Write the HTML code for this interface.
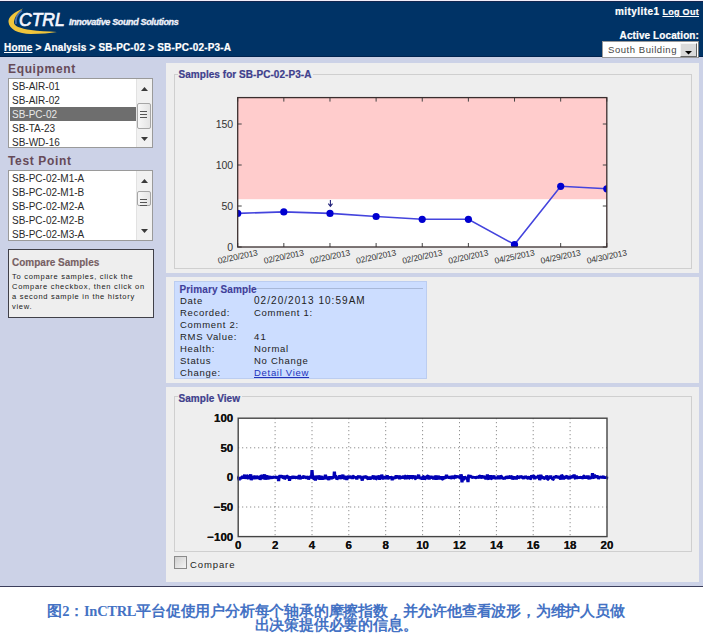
<!DOCTYPE html>
<html><head><meta charset="utf-8">
<style>
*{margin:0;padding:0;box-sizing:border-box}
html,body{width:703px;height:636px;overflow:hidden;background:#fff;font-family:"Liberation Sans",sans-serif}
.a{position:absolute}
#hdr{left:0;top:0;width:703px;height:57px;background:#003366;border-top:1px solid #f3eefa;box-shadow:inset 0 1px 0 #13264f;border-bottom:1px solid #00234f}
#side{left:0;top:57px;width:703px;height:529px;background:#ccd2e7}
#bline{left:0;top:586px;width:703px;height:1px;background:#3c3f5c}
.panel{background:#eeeeee;left:166px;width:533px}
.fs{border:1px solid #cfcfcf}
.ttl{color:#40408c;font-weight:bold;font-size:10px;letter-spacing:0.05px;line-height:12px;background:#eeeeee;padding:0 2px 0 1px;-webkit-text-stroke:0.2px #3a3a8c}
.list{background:#fff;border:1px solid #9a9a9a}
.li{position:absolute;left:3px;font-size:10px;line-height:12px;color:#2a2a2a;white-space:nowrap}
.hd{color:#664a58;font-weight:bold;font-size:12px;letter-spacing:0.65px}
.wt{color:#fff;font-weight:bold;white-space:nowrap}
.lab{position:absolute;font-size:9.5px;line-height:12px;letter-spacing:0.7px;color:#222;white-space:nowrap}
</style></head><body>
<div id="hdr" class="a"></div>
<div id="side" class="a"></div>
<div id="bline" class="a"></div>

<!-- header content -->
<svg class="a" style="left:0;top:0" width="80" height="57">
  <path d="M22,10.5 C17,14 15,18 16,24" fill="none" stroke="#6f8fd0" stroke-width="1.6" opacity="0.7"/>
  <path d="M23,8.5 C14,12 8,17 8.5,22 C9,29 18,34 31,34 C41,34 50,33 57,32 C48,31.5 38,31 31,30 C20,28.5 13.5,26 14,22 C14.5,17 18,12 23,8.5 Z" fill="#f0c53c"/>
</svg>
<div class="a" style="left:19px;top:8.5px;font-size:17.5px;line-height:22px;font-style:italic;color:#f4f6ff;-webkit-text-stroke:0.7px #f4f6ff;letter-spacing:0px">CTRL</div>
<div class="a wt" style="left:69px;top:16px;font-size:9px;line-height:12px;font-style:italic;letter-spacing:-0.35px;color:#f0f2fa;-webkit-text-stroke:0.35px #f0f2fa">Innovative Sound Solutions</div>
<div class="a wt" style="left:4px;top:42px;font-size:10px;letter-spacing:0.17px;-webkit-text-stroke:0.2px #fff"><span style="text-decoration:underline">Home</span> &gt; Analysis &gt; SB-PC-02 &gt; SB-PC-02-P3-A</div>
<div class="a wt" style="left:615px;top:6px;font-size:10px;line-height:12px;-webkit-text-stroke:0.2px #fff"><span style="letter-spacing:0.45px">mitylite1</span> <span style="font-size:9px;text-decoration:underline;letter-spacing:0.3px">Log Out</span></div>
<div class="a wt" style="right:4px;top:30px;font-size:10px;line-height:12px;letter-spacing:0.1px;-webkit-text-stroke:0.2px #fff">Active Location:</div>
<div class="a" style="left:602px;top:41px;width:97px;height:17px;background:#fff;border:1px solid #9a9a9a;border-right-color:#777"></div>
<div class="a" style="left:608px;top:43px;font-size:9.5px;line-height:13px;color:#444;letter-spacing:0.55px">South Building</div>
<div class="a" style="left:680px;top:43px;width:17px;height:14px;background:#dadada;border:1px solid #f4f4f4;border-right-color:#666;border-bottom-color:#666"></div>
<svg class="a" style="left:684.5px;top:50.5px" width="7" height="4"><path d="M0,0 H7 L3.5,3.5 Z" fill="#000"/></svg>

<!-- sidebar -->
<div class="a hd" style="left:8px;top:62px">Equipment</div>
<div class="a list" style="left:8px;top:78px;width:145px;height:70px">
  <div class="li" style="top:2px">SB-AIR-01</div>
  <div class="li" style="top:16px">SB-AIR-02</div>
  <div class="a" style="left:1px;top:28px;width:126px;height:14px;background:#6e6e6e"></div>
  <div class="li" style="top:30px;color:#e8e8e8">SB-PC-02</div>
  <div class="li" style="top:44px">SB-TA-23</div>
  <div class="li" style="top:58px">SB-WD-16</div>
  <div class="a" style="left:127px;top:0;width:16px;height:100%;background:#f1f1f1;border-left:1px solid #e2e2e2"></div>
  <svg class="a" style="left:132px;top:8px" width="7" height="4"><path d="M0,4 L3.5,0 L7,4 Z" fill="#3a3a3a"/></svg>
  <div class="a" style="left:128px;top:24px;width:14px;height:26px;border:1px solid #a6a6a6;border-radius:2px;background:linear-gradient(90deg,#f7f7f7,#e4e4e4)"></div>
  <div class="a" style="left:131px;top:32px;width:7px;height:1px;background:#555;box-shadow:0 3px 0 #555,0 6px 0 #555"></div>
  <svg class="a" style="left:132px;top:58px" width="7" height="4"><path d="M0,0 L3.5,4 L7,0 Z" fill="#3a3a3a"/></svg>
</div>
<div class="a hd" style="left:8px;top:154px">Test Point</div>
<div class="a list" style="left:8px;top:170px;width:145px;height:71px">
  <div class="li" style="top:2px">SB-PC-02-M1-A</div>
  <div class="li" style="top:16px">SB-PC-02-M1-B</div>
  <div class="li" style="top:30px">SB-PC-02-M2-A</div>
  <div class="li" style="top:44px">SB-PC-02-M2-B</div>
  <div class="li" style="top:58px">SB-PC-02-M3-A</div>
  <div class="a" style="left:127px;top:0;width:16px;height:100%;background:#f1f1f1;border-left:1px solid #e2e2e2"></div>
  <svg class="a" style="left:132px;top:8px" width="7" height="4"><path d="M0,4 L3.5,0 L7,4 Z" fill="#3a3a3a"/></svg>
  <div class="a" style="left:128px;top:20px;width:14px;height:15px;border:1px solid #a6a6a6;border-radius:2px;background:linear-gradient(90deg,#f7f7f7,#e4e4e4)"></div>
  <div class="a" style="left:131px;top:28px;width:7px;height:1px;background:#555;box-shadow:0 3px 0 #555,0 6px 0 #555"></div>
  <svg class="a" style="left:132px;top:58px" width="7" height="4"><path d="M0,0 L3.5,4 L7,0 Z" fill="#3a3a3a"/></svg>
</div>
<div class="a" style="left:8px;top:249px;width:146px;height:69px;background:#eeeeee;border:1px solid #404048"></div>
<div class="a hd" style="left:12px;top:257px;font-size:10px;letter-spacing:0;color:#765f63;-webkit-text-stroke:0.15px #765f63">Compare Samples</div>
<div class="a" style="left:12px;top:272px;font-size:7.5px;line-height:10.1px;color:#1a1a1a;width:150px;letter-spacing:0.72px;white-space:nowrap">To compare samples, click the<br>Compare checkbox, then click on<br>a second sample in the history<br>view.</div>

<!-- panel 1 -->
<div class="a panel" style="top:63px;height:210px"></div>
<div class="a fs" style="left:174px;top:74px;width:518px;height:195px"></div>
<div class="a ttl" style="left:177.5px;top:69px">Samples for SB-PC-02-P3-A</div>
<svg class="a" style="left:0;top:0" width="703" height="636" viewBox="0 0 703 636">
<rect x="237.7" y="97.6" width="369.09999999999997" height="149.4" fill="#fff"/>
<rect x="237.7" y="97.6" width="369.09999999999997" height="101.59400000000002" fill="#ffcccc"/>
<line x1="237.7" y1="247.0" x2="241.7" y2="247.0" stroke="#444" stroke-width="1"/>
<line x1="602.8" y1="247.0" x2="606.8" y2="247.0" stroke="#444" stroke-width="1"/>
<text x="233.2" y="250.8" text-anchor="end" font-size="10.5" fill="#333" font-family="Liberation Sans">0</text>
<line x1="237.7" y1="206.0" x2="241.7" y2="206.0" stroke="#444" stroke-width="1"/>
<line x1="602.8" y1="206.0" x2="606.8" y2="206.0" stroke="#444" stroke-width="1"/>
<text x="233.2" y="209.8" text-anchor="end" font-size="10.5" fill="#333" font-family="Liberation Sans">50</text>
<line x1="237.7" y1="165.0" x2="241.7" y2="165.0" stroke="#444" stroke-width="1"/>
<line x1="602.8" y1="165.0" x2="606.8" y2="165.0" stroke="#444" stroke-width="1"/>
<text x="233.2" y="168.8" text-anchor="end" font-size="10.5" fill="#333" font-family="Liberation Sans">100</text>
<line x1="237.7" y1="124.00000000000001" x2="241.7" y2="124.00000000000001" stroke="#444" stroke-width="1"/>
<line x1="602.8" y1="124.00000000000001" x2="606.8" y2="124.00000000000001" stroke="#444" stroke-width="1"/>
<text x="233.2" y="127.80000000000001" text-anchor="end" font-size="10.5" fill="#333" font-family="Liberation Sans">150</text>
<line x1="237.7" y1="97.6" x2="237.7" y2="101.6" stroke="#444" stroke-width="1"/>
<line x1="237.7" y1="243.0" x2="237.7" y2="247.0" stroke="#444" stroke-width="1"/>
<text transform="translate(238.2,259.5) rotate(-12)" text-anchor="middle" font-size="8.5" letter-spacing="-0.2" fill="#333" font-family="Liberation Sans">02/20/2013</text>
<line x1="283.8375" y1="97.6" x2="283.8375" y2="101.6" stroke="#444" stroke-width="1"/>
<line x1="283.8375" y1="243.0" x2="283.8375" y2="247.0" stroke="#444" stroke-width="1"/>
<text transform="translate(284.3375,259.5) rotate(-12)" text-anchor="middle" font-size="8.5" letter-spacing="-0.2" fill="#333" font-family="Liberation Sans">02/20/2013</text>
<line x1="329.97499999999997" y1="97.6" x2="329.97499999999997" y2="101.6" stroke="#444" stroke-width="1"/>
<line x1="329.97499999999997" y1="243.0" x2="329.97499999999997" y2="247.0" stroke="#444" stroke-width="1"/>
<text transform="translate(330.47499999999997,259.5) rotate(-12)" text-anchor="middle" font-size="8.5" letter-spacing="-0.2" fill="#333" font-family="Liberation Sans">02/20/2013</text>
<line x1="376.11249999999995" y1="97.6" x2="376.11249999999995" y2="101.6" stroke="#444" stroke-width="1"/>
<line x1="376.11249999999995" y1="243.0" x2="376.11249999999995" y2="247.0" stroke="#444" stroke-width="1"/>
<text transform="translate(376.61249999999995,259.5) rotate(-12)" text-anchor="middle" font-size="8.5" letter-spacing="-0.2" fill="#333" font-family="Liberation Sans">02/20/2013</text>
<line x1="422.25" y1="97.6" x2="422.25" y2="101.6" stroke="#444" stroke-width="1"/>
<line x1="422.25" y1="243.0" x2="422.25" y2="247.0" stroke="#444" stroke-width="1"/>
<text transform="translate(422.75,259.5) rotate(-12)" text-anchor="middle" font-size="8.5" letter-spacing="-0.2" fill="#333" font-family="Liberation Sans">02/20/2013</text>
<line x1="468.38749999999993" y1="97.6" x2="468.38749999999993" y2="101.6" stroke="#444" stroke-width="1"/>
<line x1="468.38749999999993" y1="243.0" x2="468.38749999999993" y2="247.0" stroke="#444" stroke-width="1"/>
<text transform="translate(468.88749999999993,259.5) rotate(-12)" text-anchor="middle" font-size="8.5" letter-spacing="-0.2" fill="#333" font-family="Liberation Sans">02/20/2013</text>
<line x1="514.525" y1="97.6" x2="514.525" y2="101.6" stroke="#444" stroke-width="1"/>
<line x1="514.525" y1="243.0" x2="514.525" y2="247.0" stroke="#444" stroke-width="1"/>
<text transform="translate(515.025,259.5) rotate(-12)" text-anchor="middle" font-size="8.5" letter-spacing="-0.2" fill="#333" font-family="Liberation Sans">04/25/2013</text>
<line x1="560.6624999999999" y1="97.6" x2="560.6624999999999" y2="101.6" stroke="#444" stroke-width="1"/>
<line x1="560.6624999999999" y1="243.0" x2="560.6624999999999" y2="247.0" stroke="#444" stroke-width="1"/>
<text transform="translate(561.1624999999999,259.5) rotate(-12)" text-anchor="middle" font-size="8.5" letter-spacing="-0.2" fill="#333" font-family="Liberation Sans">04/29/2013</text>
<line x1="606.8" y1="97.6" x2="606.8" y2="101.6" stroke="#444" stroke-width="1"/>
<line x1="606.8" y1="243.0" x2="606.8" y2="247.0" stroke="#444" stroke-width="1"/>
<text transform="translate(607.3,259.5) rotate(-12)" text-anchor="middle" font-size="8.5" letter-spacing="-0.2" fill="#333" font-family="Liberation Sans">04/30/2013</text>
<defs><clipPath id="ax1"><rect x="237.7" y="97.6" width="369.09999999999997" height="149.4"/></clipPath></defs><g clip-path="url(#ax1)">
<polyline points="237.7,213.4 283.8,211.9 330.0,213.4 376.1,216.5 422.2,219.3 468.4,219.3 514.5,244.5 560.7,186.3 606.8,188.8" fill="none" stroke="#4444dd" stroke-width="1.6"/>
<circle cx="237.7" cy="213.4" r="3.6" fill="#0000d0"/>
<circle cx="283.8" cy="211.9" r="3.6" fill="#0000d0"/>
<circle cx="330.0" cy="213.4" r="3.6" fill="#0000d0"/>
<circle cx="376.1" cy="216.5" r="3.6" fill="#0000d0"/>
<circle cx="422.2" cy="219.3" r="3.6" fill="#0000d0"/>
<circle cx="468.4" cy="219.3" r="3.6" fill="#0000d0"/>
<circle cx="514.5" cy="244.5" r="3.6" fill="#0000d0"/>
<circle cx="560.7" cy="186.3" r="3.6" fill="#0000d0"/>
<circle cx="606.8" cy="188.8" r="3.6" fill="#0000d0"/>
</g>
<rect x="237.7" y="97.6" width="369.09999999999997" height="149.4" fill="none" stroke="#3a2e2e" stroke-width="1.3"/>
<path d="M330.4,200 V206 M328.3,203.6 L330.4,206.4 L332.5,203.6" fill="none" stroke="#22227a" stroke-width="1.1"/>
</svg>

<!-- panel 2 -->
<div class="a panel" style="top:277px;height:106px"></div>
<div class="a" style="left:174px;top:281px;width:253px;height:98px;background:#ccddff;border:1px solid #bccdf0"></div>
<div class="a" style="left:237px;top:288px;width:186px;height:1px;background:#a8b8d8"></div>
<div class="a ttl" style="left:178.5px;top:283.5px;background:none;-webkit-text-stroke:0.1px #3f3f9a;color:#3f3f9a;letter-spacing:0.12px">Primary Sample</div>
<div class="a lab" style="left:180px;top:295px">Date</div>
<div class="a lab" style="left:254px;top:295px;font-size:10px;letter-spacing:1.05px;">02/20/2013 10:59AM</div>
<div class="a lab" style="left:180px;top:307px">Recorded:</div>
<div class="a lab" style="left:254px;top:307px;">Comment 1:</div>
<div class="a lab" style="left:180px;top:319px">Comment 2:</div>
<div class="a lab" style="left:180px;top:331px">RMS Value:</div>
<div class="a lab" style="left:254px;top:331px;letter-spacing:1.3px;">41</div>
<div class="a lab" style="left:180px;top:343px">Health:</div>
<div class="a lab" style="left:254px;top:343px;">Normal</div>
<div class="a lab" style="left:180px;top:355px">Status</div>
<div class="a lab" style="left:254px;top:355px;">No Change</div>
<div class="a lab" style="left:180px;top:367px">Change:</div>
<div class="a lab" style="left:254px;top:367px;color:#2233bb;text-decoration:underline;">Detail View</div>

<!-- panel 3 -->
<div class="a panel" style="top:387px;height:195px"></div>
<div class="a fs" style="left:174px;top:396px;width:518px;height:156px"></div>
<div class="a ttl" style="left:177.5px;top:393px">Sample View</div>
<svg class="a" style="left:0;top:0" width="703" height="636" viewBox="0 0 703 636">
<rect x="238.2" y="418.2" width="368.8" height="118.40000000000003" fill="#fff"/>
<text x="238.2" y="548.6" text-anchor="middle" font-size="11.5" font-weight="bold" fill="#111" font-family="Liberation Sans">0</text>
<line x1="275.1" y1="418.2" x2="275.1" y2="536.6" stroke="#777" stroke-width="1" stroke-dasharray="1,3"/>
<text x="275.1" y="548.6" text-anchor="middle" font-size="11.5" font-weight="bold" fill="#111" font-family="Liberation Sans">2</text>
<line x1="312.0" y1="418.2" x2="312.0" y2="536.6" stroke="#777" stroke-width="1" stroke-dasharray="1,3"/>
<text x="312.0" y="548.6" text-anchor="middle" font-size="11.5" font-weight="bold" fill="#111" font-family="Liberation Sans">4</text>
<line x1="348.8" y1="418.2" x2="348.8" y2="536.6" stroke="#777" stroke-width="1" stroke-dasharray="1,3"/>
<text x="348.8" y="548.6" text-anchor="middle" font-size="11.5" font-weight="bold" fill="#111" font-family="Liberation Sans">6</text>
<line x1="385.7" y1="418.2" x2="385.7" y2="536.6" stroke="#777" stroke-width="1" stroke-dasharray="1,3"/>
<text x="385.7" y="548.6" text-anchor="middle" font-size="11.5" font-weight="bold" fill="#111" font-family="Liberation Sans">8</text>
<line x1="422.6" y1="418.2" x2="422.6" y2="536.6" stroke="#777" stroke-width="1" stroke-dasharray="1,3"/>
<text x="422.6" y="548.6" text-anchor="middle" font-size="11.5" font-weight="bold" fill="#111" font-family="Liberation Sans">10</text>
<line x1="459.5" y1="418.2" x2="459.5" y2="536.6" stroke="#777" stroke-width="1" stroke-dasharray="1,3"/>
<text x="459.5" y="548.6" text-anchor="middle" font-size="11.5" font-weight="bold" fill="#111" font-family="Liberation Sans">12</text>
<line x1="496.4" y1="418.2" x2="496.4" y2="536.6" stroke="#777" stroke-width="1" stroke-dasharray="1,3"/>
<text x="496.4" y="548.6" text-anchor="middle" font-size="11.5" font-weight="bold" fill="#111" font-family="Liberation Sans">14</text>
<line x1="533.2" y1="418.2" x2="533.2" y2="536.6" stroke="#777" stroke-width="1" stroke-dasharray="1,3"/>
<text x="533.2" y="548.6" text-anchor="middle" font-size="11.5" font-weight="bold" fill="#111" font-family="Liberation Sans">16</text>
<line x1="570.1" y1="418.2" x2="570.1" y2="536.6" stroke="#777" stroke-width="1" stroke-dasharray="1,3"/>
<text x="570.1" y="548.6" text-anchor="middle" font-size="11.5" font-weight="bold" fill="#111" font-family="Liberation Sans">18</text>
<text x="607.0" y="548.6" text-anchor="middle" font-size="11.5" font-weight="bold" fill="#111" font-family="Liberation Sans">20</text>
<text x="233.2" y="540.6" text-anchor="end" font-size="11.5" font-weight="bold" fill="#111" font-family="Liberation Sans">−100</text>
<line x1="238.2" y1="507.0" x2="607.0" y2="507.0" stroke="#777" stroke-width="1" stroke-dasharray="1,3"/>
<text x="233.2" y="511.0" text-anchor="end" font-size="11.5" font-weight="bold" fill="#111" font-family="Liberation Sans">−50</text>
<line x1="238.2" y1="477.4" x2="607.0" y2="477.4" stroke="#777" stroke-width="1" stroke-dasharray="1,3"/>
<text x="233.2" y="481.4" text-anchor="end" font-size="11.5" font-weight="bold" fill="#111" font-family="Liberation Sans">0</text>
<line x1="238.2" y1="447.8" x2="607.0" y2="447.8" stroke="#777" stroke-width="1" stroke-dasharray="1,3"/>
<text x="233.2" y="451.8" text-anchor="end" font-size="11.5" font-weight="bold" fill="#111" font-family="Liberation Sans">50</text>
<text x="233.2" y="422.2" text-anchor="end" font-size="11.5" font-weight="bold" fill="#111" font-family="Liberation Sans">100</text>
<polyline points="238.2,477.1 238.4,477.9 238.7,476.5 238.9,477.2 239.2,478.4 239.4,477.6 239.7,475.7 239.9,478.3 240.2,475.7 240.4,475.7 240.7,477.7 240.9,477.4 241.2,477.7 241.4,477.8 241.7,478.0 241.9,478.6 242.2,477.1 242.4,477.3 242.7,477.0 242.9,476.4 243.2,476.6 243.4,477.6 243.7,477.4 243.9,478.7 244.2,477.3 244.4,476.6 244.7,475.9 244.9,478.2 245.2,478.8 245.4,477.8 245.7,478.0 245.9,476.8 246.2,476.4 246.4,476.9 246.7,475.9 246.9,477.6 247.2,475.5 247.4,474.9 247.7,476.3 247.9,478.4 248.2,477.6 248.4,477.8 248.7,477.9 248.9,477.9 249.2,478.4 249.4,477.9 249.7,478.2 249.9,475.6 250.2,476.1 250.4,479.0 250.7,477.7 250.9,478.0 251.2,476.3 251.4,477.0 251.7,476.5 251.9,478.3 252.2,476.0 252.4,477.3 252.7,478.8 252.9,476.4 253.2,476.6 253.4,478.0 253.6,477.7 253.9,477.5 254.1,477.1 254.4,477.7 254.6,478.2 254.9,478.0 255.1,477.0 255.4,477.0 255.6,477.1 255.9,477.8 256.1,476.3 256.4,477.6 256.6,477.0 256.9,478.1 257.1,479.8 257.4,477.8 257.6,477.2 257.9,477.3 258.1,478.4 258.4,476.2 258.6,478.3 258.9,478.9 259.1,477.1 259.4,478.0 259.6,478.5 259.9,476.0 260.1,477.6 260.4,478.6 260.6,478.2 260.9,477.5 261.1,478.4 261.4,477.1 261.6,478.3 261.9,477.1 262.1,477.6 262.4,478.0 262.6,478.0 262.9,476.4 263.1,478.7 263.4,478.1 263.6,477.4 263.9,476.3 264.1,476.5 264.4,479.0 264.6,475.4 264.9,478.8 265.1,477.8 265.4,477.8 265.6,478.5 265.9,478.9 266.1,476.7 266.4,478.4 266.6,478.8 266.9,477.1 267.1,475.5 267.4,478.2 267.6,477.4 267.9,478.2 268.1,477.3 268.4,478.4 268.6,476.7 268.9,478.3 269.1,475.4 269.3,478.5 269.6,477.2 269.8,477.4 270.1,479.2 270.3,477.4 270.6,477.2 270.8,476.1 271.1,475.8 271.3,476.8 271.6,477.4 271.8,478.2 272.1,475.8 272.3,476.8 272.6,476.5 272.8,476.6 273.1,476.2 273.3,477.8 273.6,476.8 273.8,475.5 274.1,475.2 274.3,476.5 274.6,478.2 274.8,478.1 275.1,478.7 275.3,478.1 275.6,478.3 275.8,478.7 276.1,479.3 276.3,475.6 276.6,476.5 276.8,478.1 277.1,478.0 277.3,478.3 277.6,477.7 277.8,478.2 278.1,476.4 278.3,477.0 278.6,476.5 278.8,476.6 279.1,478.0 279.3,474.8 279.6,479.1 279.8,477.8 280.1,475.5 280.3,478.4 280.6,478.7 280.8,479.2 281.1,477.7 281.3,477.6 281.6,479.5 281.8,478.4 282.1,479.1 282.3,478.4 282.6,476.5 282.8,477.7 283.1,477.3 283.3,477.9 283.6,477.9 283.8,477.8 284.1,477.1 284.3,478.2 284.5,476.8 284.8,477.4 285.0,477.4 285.3,477.6 285.5,477.8 285.8,478.5 286.0,477.8 286.3,476.4 286.5,476.5 286.8,478.1 287.0,476.4 287.3,479.0 287.5,476.6 287.8,477.9 288.0,478.9 288.3,478.1 288.5,479.1 288.8,478.4 289.0,477.3 289.3,478.1 289.5,478.0 289.8,478.3 290.0,478.6 290.3,477.2 290.5,476.9 290.8,478.3 291.0,476.2 291.3,477.6 291.5,478.2 291.8,477.4 292.0,477.6 292.3,477.5 292.5,476.3 292.8,476.8 293.0,477.0 293.3,475.4 293.5,478.0 293.8,477.3 294.0,479.2 294.3,477.9 294.5,477.2 294.8,475.6 295.0,475.5 295.3,477.3 295.5,475.6 295.8,476.3 296.0,477.4 296.3,477.6 296.5,478.9 296.8,478.6 297.0,476.3 297.3,475.7 297.5,477.9 297.8,475.8 298.0,477.2 298.3,477.1 298.5,478.1 298.8,477.8 299.0,477.2 299.3,474.7 299.5,475.9 299.7,477.6 300.0,477.1 300.2,477.1 300.5,477.4 300.7,476.5 301.0,478.1 301.2,477.7 301.5,477.0 301.7,476.7 302.0,476.9 302.2,477.5 302.5,479.7 302.7,477.1 303.0,478.5 303.2,475.0 303.5,478.0 303.7,479.7 304.0,478.2 304.2,478.3 304.5,477.9 304.7,476.3 305.0,477.6 305.2,479.5 305.5,478.6 305.7,477.4 306.0,478.0 306.2,478.1 306.5,479.1 306.7,477.4 307.0,478.8 307.2,476.7 307.5,476.7 307.7,478.1 308.0,476.7 308.2,478.2 308.5,478.9 308.7,478.5 309.0,477.4 309.2,478.2 309.5,475.7 309.7,479.2 310.0,475.9 310.2,475.8 310.5,477.3 310.7,477.1 311.0,477.4 311.2,476.0 311.5,477.9 311.7,477.2 312.0,476.9 312.2,479.0 312.5,476.9 312.7,476.7 313.0,477.7 313.2,477.9 313.5,476.7 313.7,477.4 314.0,476.9 314.2,477.6 314.5,477.2 314.7,477.8 315.0,475.5 315.2,476.5 315.4,476.4 315.7,478.0 315.9,478.1 316.2,477.7 316.4,476.0 316.7,477.4 316.9,477.3 317.2,478.1 317.4,479.3 317.7,476.8 317.9,478.9 318.2,477.7 318.4,477.4 318.7,477.4 318.9,478.3 319.2,475.7 319.4,477.8 319.7,477.8 319.9,478.9 320.2,476.8 320.4,476.2 320.7,477.7 320.9,477.6 321.2,479.6 321.4,477.9 321.7,477.9 321.9,477.7 322.2,477.6 322.4,476.9 322.7,477.9 322.9,477.0 323.2,478.5 323.4,478.2 323.7,476.6 323.9,478.9 324.2,477.0 324.4,475.9 324.7,477.4 324.9,476.3 325.2,475.4 325.4,476.9 325.7,478.3 325.9,477.9 326.2,475.8 326.4,478.2 326.7,477.2 326.9,477.7 327.2,479.1 327.4,476.8 327.7,477.4 327.9,476.2 328.2,475.3 328.4,478.0 328.7,480.0 328.9,478.3 329.2,477.8 329.4,477.0 329.7,474.0 329.9,478.3 330.2,479.6 330.4,476.9 330.6,476.6 330.9,477.4 331.1,477.5 331.4,477.9 331.6,477.3 331.9,476.2 332.1,478.9 332.4,478.5 332.6,477.7 332.9,477.7 333.1,478.3 333.4,475.9 333.6,478.4 333.9,477.8 334.1,477.5 334.4,477.4 334.6,475.3 334.9,478.7 335.1,477.0 335.4,476.9 335.6,478.1 335.9,478.6 336.1,476.7 336.4,477.5 336.6,478.5 336.9,476.8 337.1,477.9 337.4,478.0 337.6,477.1 337.9,478.2 338.1,475.9 338.4,477.0 338.6,478.3 338.9,477.9 339.1,479.0 339.4,478.6 339.6,477.7 339.9,479.6 340.1,475.4 340.4,478.4 340.6,478.1 340.9,477.5 341.1,478.4 341.4,477.4 341.6,475.5 341.9,477.9 342.1,476.7 342.4,477.4 342.6,476.7 342.9,478.6 343.1,479.1 343.4,474.9 343.6,479.3 343.9,477.9 344.1,476.0 344.4,475.6 344.6,477.7 344.9,478.2 345.1,477.6 345.4,478.7 345.6,477.2 345.8,478.1 346.1,476.6 346.3,477.8 346.6,477.2 346.8,477.6 347.1,478.3 347.3,477.4 347.6,478.8 347.8,478.3 348.1,477.5 348.3,477.1 348.6,478.0 348.8,477.8 349.1,477.6 349.3,477.1 349.6,477.1 349.8,476.7 350.1,477.8 350.3,476.9 350.6,478.6 350.8,479.6 351.1,474.9 351.3,477.3 351.6,476.7 351.8,475.8 352.1,478.3 352.3,476.8 352.6,477.5 352.8,476.0 353.1,475.7 353.3,476.6 353.6,478.3 353.8,475.1 354.1,477.1 354.3,478.3 354.6,474.9 354.8,480.0 355.1,476.4 355.3,478.3 355.6,477.0 355.8,477.7 356.1,476.9 356.3,475.8 356.6,478.5 356.8,477.6 357.1,478.4 357.3,477.9 357.6,477.9 357.8,478.6 358.1,477.7 358.3,477.7 358.6,477.0 358.8,476.8 359.1,476.8 359.3,476.1 359.6,478.1 359.8,478.8 360.1,477.6 360.3,477.5 360.6,475.7 360.8,476.9 361.1,477.5 361.3,478.3 361.5,478.0 361.8,477.1 362.0,477.1 362.3,477.1 362.5,477.4 362.8,477.9 363.0,477.2 363.3,477.2 363.5,475.6 363.8,474.9 364.0,477.5 364.3,478.0 364.5,475.2 364.8,477.4 365.0,476.8 365.3,477.6 365.5,476.9 365.8,477.6 366.0,478.2 366.3,478.0 366.5,477.5 366.8,476.5 367.0,475.5 367.3,478.3 367.5,478.2 367.8,478.3 368.0,476.5 368.3,479.9 368.5,479.3 368.8,477.6 369.0,476.7 369.3,476.3 369.5,478.7 369.8,477.4 370.0,477.1 370.3,475.6 370.5,475.2 370.8,477.4 371.0,477.5 371.3,476.6 371.5,476.7 371.8,477.9 372.0,477.9 372.3,478.3 372.5,477.4 372.8,477.6 373.0,478.7 373.3,476.6 373.5,476.6 373.8,477.4 374.0,478.0 374.3,478.6 374.5,476.1 374.8,478.8 375.0,477.5 375.3,476.7 375.5,476.5 375.8,477.4 376.0,479.6 376.3,476.8 376.5,477.8 376.7,478.7 377.0,477.5 377.2,477.8 377.5,478.7 377.7,477.6 378.0,476.8 378.2,479.4 378.5,478.0 378.7,479.3 379.0,477.5 379.2,477.3 379.5,476.3 379.7,477.4 380.0,477.7 380.2,476.7 380.5,475.6 380.7,476.4 381.0,477.0 381.2,477.3 381.5,478.8 381.7,477.5 382.0,477.3 382.2,477.3 382.5,475.0 382.7,478.1 383.0,476.8 383.2,476.4 383.5,476.3 383.7,475.5 384.0,477.8 384.2,475.9 384.5,478.0 384.7,477.7 385.0,478.8 385.2,477.5 385.5,477.6 385.7,477.1 386.0,477.9 386.2,476.9 386.5,476.1 386.7,478.6 387.0,477.9 387.2,478.3 387.5,475.5 387.7,479.5 388.0,476.2 388.2,477.6 388.5,477.6 388.7,476.2 389.0,476.0 389.2,477.8 389.5,477.7 389.7,477.0 390.0,478.4 390.2,477.1 390.5,479.0 390.7,478.6 391.0,477.1 391.2,478.4 391.5,477.6 391.7,476.5 391.9,478.7 392.2,477.7 392.4,477.1 392.7,478.1 392.9,477.4 393.2,478.6 393.4,477.4 393.7,477.9 393.9,478.5 394.2,477.2 394.4,479.8 394.7,477.0 394.9,476.3 395.2,478.9 395.4,478.3 395.7,476.7 395.9,476.7 396.2,477.7 396.4,477.1 396.7,477.6 396.9,478.2 397.2,475.9 397.4,478.8 397.7,475.8 397.9,477.1 398.2,476.9 398.4,478.1 398.7,476.5 398.9,476.0 399.2,477.6 399.4,476.1 399.7,478.0 399.9,476.9 400.2,476.8 400.4,475.6 400.7,477.4 400.9,478.3 401.2,477.1 401.4,478.0 401.7,479.5 401.9,478.9 402.2,479.2 402.4,477.2 402.7,477.9 402.9,478.7 403.2,477.2 403.4,477.6 403.7,477.0 403.9,476.3 404.2,478.3 404.4,478.5 404.7,478.3 404.9,476.8 405.2,476.8 405.4,477.7 405.7,477.6 405.9,475.9 406.2,476.7 406.4,476.5 406.7,478.3 406.9,478.0 407.2,476.9 407.4,476.8 407.6,476.7 407.9,476.7 408.1,478.0 408.4,478.7 408.6,474.7 408.9,477.6 409.1,478.3 409.4,478.9 409.6,478.5 409.9,478.2 410.1,476.0 410.4,477.3 410.6,475.3 410.9,478.7 411.1,476.1 411.4,478.5 411.6,477.2 411.9,477.7 412.1,478.4 412.4,477.5 412.6,476.9 412.9,478.0 413.1,478.5 413.4,476.9 413.6,476.9 413.9,477.8 414.1,477.9 414.4,476.1 414.6,477.8 414.9,479.9 415.1,478.2 415.4,475.7 415.6,476.9 415.9,477.2 416.1,477.9 416.4,476.8 416.6,476.5 416.9,477.7 417.1,477.3 417.4,478.1 417.6,476.1 417.9,478.0 418.1,479.2 418.4,476.5 418.6,478.9 418.9,476.4 419.1,477.3 419.4,477.3 419.6,477.0 419.9,476.8 420.1,477.6 420.4,479.1 420.6,478.9 420.9,476.4 421.1,476.0 421.4,476.3 421.6,477.9 421.9,475.5 422.1,475.8 422.4,477.1 422.6,476.7 422.8,477.1 423.1,477.1 423.3,477.4 423.6,476.2 423.8,477.5 424.1,479.3 424.3,477.5 424.6,476.4 424.8,475.7 425.1,477.8 425.3,477.3 425.6,478.7 425.8,477.6 426.1,476.0 426.3,479.9 426.6,477.6 426.8,477.2 427.1,476.3 427.3,479.1 427.6,475.7 427.8,477.1 428.1,476.3 428.3,478.0 428.6,477.9 428.8,476.5 429.1,474.7 429.3,477.3 429.6,477.0 429.8,478.2 430.1,476.2 430.3,476.1 430.6,478.3 430.8,476.6 431.1,478.0 431.3,477.4 431.6,476.4 431.8,475.9 432.1,476.4 432.3,476.5 432.6,477.1 432.8,476.8 433.1,477.4 433.3,476.9 433.6,477.7 433.8,475.2 434.1,478.2 434.3,475.8 434.6,477.1 434.8,478.4 435.1,475.9 435.3,475.6 435.6,477.9 435.8,477.5 436.1,478.3 436.3,476.9 436.6,475.4 436.8,476.1 437.1,477.0 437.3,477.6 437.6,477.2 437.8,477.5 438.0,479.3 438.3,479.2 438.5,477.5 438.8,477.5 439.0,477.3 439.3,476.8 439.5,477.0 439.8,475.5 440.0,476.3 440.3,476.3 440.5,477.3 440.8,480.0 441.0,478.8 441.3,477.5 441.5,476.8 441.8,478.9 442.0,477.1 442.3,477.4 442.5,476.0 442.8,478.0 443.0,476.5 443.3,478.5 443.5,476.1 443.8,478.6 444.0,476.6 444.3,477.1 444.5,476.9 444.8,475.6 445.0,479.3 445.3,477.1 445.5,475.5 445.8,478.3 446.0,475.7 446.3,476.1 446.5,478.2 446.8,477.4 447.0,478.2 447.3,475.5 447.5,478.2 447.8,475.5 448.0,478.5 448.3,475.9 448.5,477.2 448.8,477.7 449.0,477.9 449.3,479.0 449.5,476.2 449.8,476.5 450.0,477.4 450.3,479.1 450.5,478.9 450.8,478.3 451.0,475.5 451.3,476.4 451.5,476.1 451.8,477.6 452.0,478.1 452.3,478.8 452.5,476.4 452.8,478.1 453.0,478.4 453.3,477.4 453.5,477.5 453.7,476.8 454.0,477.2 454.2,477.4 454.5,478.2 454.7,476.5 455.0,477.6 455.2,476.4 455.5,478.5 455.7,475.1 456.0,477.6 456.2,478.0 456.5,475.5 456.7,476.7 457.0,477.7 457.2,477.2 457.5,479.2 457.7,479.1 458.0,475.8 458.2,475.5 458.5,476.8 458.7,477.6 459.0,477.4 459.2,477.7 459.5,479.2 459.7,476.2 460.0,477.8 460.2,475.9 460.5,477.9 460.7,477.6 461.0,477.0 461.2,476.6 461.5,478.1 461.7,477.9 462.0,476.8 462.2,477.5 462.5,477.3 462.7,477.3 463.0,479.6 463.2,477.9 463.5,478.8 463.7,475.8 464.0,479.3 464.2,478.7 464.5,476.5 464.7,477.7 465.0,477.0 465.2,477.0 465.5,477.1 465.7,476.2 466.0,477.3 466.2,478.4 466.5,477.9 466.7,476.6 467.0,476.5 467.2,479.4 467.5,479.4 467.7,478.1 468.0,476.6 468.2,477.5 468.5,475.4 468.7,479.7 468.9,478.1 469.2,477.9 469.4,477.3 469.7,476.6 469.9,477.7 470.2,476.0 470.4,478.0 470.7,476.3 470.9,478.0 471.2,477.0 471.4,478.1 471.7,479.0 471.9,477.8 472.2,477.6 472.4,477.3 472.7,478.1 472.9,477.9 473.2,476.2 473.4,477.3 473.7,476.4 473.9,477.7 474.2,476.6 474.4,477.2 474.7,477.4 474.9,477.9 475.2,476.8 475.4,477.0 475.7,477.8 475.9,478.6 476.2,477.4 476.4,478.5 476.7,478.5 476.9,476.7 477.2,478.8 477.4,479.3 477.7,478.2 477.9,476.2 478.2,477.3 478.4,478.1 478.7,477.3 478.9,477.4 479.2,479.2 479.4,477.2 479.7,476.8 479.9,476.3 480.2,476.8 480.4,478.5 480.7,476.2 480.9,476.2 481.2,477.4 481.4,476.9 481.7,477.7 481.9,478.2 482.2,478.4 482.4,478.5 482.7,475.3 482.9,478.1 483.2,476.4 483.4,477.6 483.7,476.5 483.9,474.8 484.1,478.5 484.4,478.2 484.6,475.6 484.9,479.7 485.1,476.8 485.4,476.8 485.6,476.7 485.9,476.3 486.1,477.9 486.4,479.1 486.6,477.1 486.9,478.2 487.1,475.5 487.4,476.9 487.6,476.8 487.9,475.2 488.1,476.8 488.4,476.3 488.6,477.3 488.9,476.9 489.1,478.8 489.4,478.6 489.6,477.1 489.9,476.8 490.1,477.3 490.4,477.1 490.6,478.4 490.9,478.5 491.1,478.1 491.4,476.1 491.6,476.8 491.9,476.2 492.1,477.7 492.4,477.1 492.6,478.1 492.9,476.4 493.1,478.3 493.4,477.9 493.6,476.8 493.9,476.8 494.1,480.3 494.4,477.6 494.6,477.7 494.9,478.3 495.1,477.8 495.4,478.0 495.6,477.9 495.9,477.9 496.1,478.1 496.4,475.9 496.6,476.1 496.9,477.3 497.1,475.8 497.4,477.7 497.6,475.9 497.9,477.5 498.1,477.3 498.4,474.8 498.6,477.4 498.9,477.8 499.1,475.4 499.4,476.3 499.6,477.7 499.8,476.4 500.1,478.2 500.3,477.8 500.6,475.5 500.8,477.7 501.1,478.2 501.3,477.0 501.6,477.2 501.8,478.5 502.1,475.8 502.3,475.4 502.6,478.4 502.8,476.3 503.1,476.9 503.3,473.9 503.6,476.5 503.8,477.0 504.1,476.5 504.3,476.0 504.6,479.4 504.8,478.2 505.1,478.0 505.3,475.6 505.6,476.5 505.8,476.1 506.1,477.9 506.3,475.6 506.6,477.1 506.8,479.3 507.1,477.1 507.3,478.6 507.6,476.5 507.8,478.2 508.1,476.7 508.3,476.2 508.6,477.3 508.8,476.5 509.1,476.4 509.3,477.2 509.6,477.2 509.8,476.5 510.1,478.8 510.3,478.1 510.6,476.3 510.8,476.1 511.1,477.4 511.3,474.0 511.6,476.7 511.8,477.8 512.1,477.8 512.3,477.9 512.6,477.8 512.8,476.0 513.1,476.2 513.3,477.5 513.6,476.5 513.8,477.8 514.1,478.1 514.3,476.6 514.6,476.9 514.8,479.4 515.0,478.1 515.3,476.1 515.5,477.9 515.8,479.2 516.0,476.6 516.3,477.7 516.5,476.6 516.8,475.0 517.0,477.5 517.3,477.3 517.5,476.7 517.8,475.6 518.0,477.6 518.3,477.0 518.5,477.9 518.8,476.9 519.0,477.2 519.3,477.1 519.5,477.6 519.8,477.0 520.0,478.0 520.3,477.4 520.5,477.7 520.8,478.3 521.0,478.7 521.3,477.7 521.5,476.9 521.8,477.6 522.0,476.8 522.3,475.6 522.5,479.2 522.8,476.7 523.0,477.4 523.3,477.2 523.5,476.7 523.8,476.9 524.0,478.0 524.3,477.8 524.5,477.0 524.8,477.2 525.0,479.1 525.3,476.6 525.5,477.0 525.8,478.3 526.0,479.1 526.3,478.4 526.5,478.2 526.8,477.3 527.0,477.8 527.3,478.5 527.5,478.5 527.8,478.9 528.0,476.5 528.3,477.9 528.5,478.0 528.8,476.9 529.0,476.6 529.3,477.2 529.5,476.7 529.8,477.0 530.0,476.9 530.2,477.2 530.5,475.8 530.7,477.7 531.0,478.0 531.2,478.2 531.5,477.6 531.7,478.1 532.0,476.3 532.2,476.0 532.5,476.4 532.7,478.3 533.0,475.9 533.2,478.2 533.5,476.3 533.7,478.8 534.0,478.5 534.2,477.4 534.5,477.0 534.7,477.4 535.0,475.5 535.2,478.4 535.5,477.1 535.7,477.3 536.0,475.5 536.2,478.9 536.5,477.9 536.7,477.9 537.0,477.2 537.2,476.9 537.5,475.7 537.7,478.8 538.0,477.1 538.2,478.3 538.5,477.7 538.7,477.2 539.0,477.9 539.2,477.5 539.5,478.1 539.7,478.3 540.0,477.0 540.2,478.2 540.5,478.4 540.7,475.8 541.0,476.9 541.2,476.5 541.5,476.8 541.7,478.0 542.0,477.9 542.2,478.2 542.5,477.7 542.7,476.9 543.0,477.6 543.2,477.0 543.5,477.9 543.7,479.1 544.0,477.3 544.2,478.7 544.5,477.2 544.7,476.8 545.0,477.0 545.2,478.7 545.5,476.7 545.7,477.0 545.9,476.8 546.2,479.1 546.4,477.7 546.7,478.0 546.9,478.7 547.2,478.3 547.4,478.9 547.7,477.1 547.9,478.0 548.2,476.5 548.4,478.3 548.7,477.4 548.9,477.7 549.2,478.1 549.4,476.0 549.7,476.2 549.9,477.4 550.2,477.0 550.4,477.2 550.7,474.9 550.9,478.3 551.2,476.8 551.4,477.0 551.7,478.5 551.9,475.7 552.2,477.1 552.4,478.8 552.7,476.8 552.9,478.3 553.2,477.9 553.4,477.1 553.7,476.5 553.9,477.0 554.2,476.9 554.4,478.4 554.7,479.2 554.9,475.4 555.2,477.5 555.4,477.1 555.7,477.0 555.9,478.6 556.2,476.9 556.4,476.7 556.7,478.0 556.9,477.5 557.2,478.7 557.4,478.1 557.7,476.3 557.9,478.0 558.2,477.9 558.4,477.8 558.7,478.9 558.9,478.7 559.2,476.7 559.4,477.3 559.7,477.6 559.9,478.7 560.2,477.1 560.4,477.2 560.7,475.5 560.9,478.1 561.1,477.4 561.4,476.9 561.6,478.9 561.9,478.5 562.1,478.6 562.4,477.1 562.6,477.5 562.9,477.1 563.1,478.7 563.4,477.5 563.6,477.1 563.9,476.4 564.1,478.3 564.4,476.5 564.6,478.2 564.9,478.8 565.1,476.6 565.4,475.7 565.6,477.2 565.9,475.0 566.1,477.0 566.4,477.1 566.6,479.1 566.9,478.9 567.1,477.8 567.4,478.4 567.6,477.6 567.9,477.5 568.1,477.9 568.4,478.6 568.6,477.0 568.9,477.8 569.1,476.7 569.4,475.7 569.6,477.1 569.9,477.9 570.1,477.5 570.4,477.1 570.6,477.0 570.9,476.5 571.1,478.0 571.4,476.6 571.6,478.2 571.9,477.8 572.1,477.1 572.4,477.2 572.6,476.1 572.9,477.7 573.1,478.7 573.4,477.4 573.6,474.6 573.9,478.1 574.1,477.0 574.4,476.7 574.6,477.3 574.9,478.7 575.1,477.7 575.4,477.4 575.6,478.6 575.9,476.2 576.1,476.9 576.3,478.0 576.6,478.8 576.8,476.8 577.1,477.3 577.3,476.2 577.6,476.4 577.8,477.1 578.1,476.1 578.3,480.1 578.6,477.4 578.8,478.1 579.1,479.4 579.3,477.5 579.6,476.6 579.8,477.0 580.1,477.1 580.3,478.2 580.6,478.2 580.8,477.1 581.1,477.9 581.3,477.7 581.6,476.3 581.8,478.8 582.1,478.4 582.3,477.9 582.6,477.4 582.8,477.6 583.1,477.2 583.3,476.7 583.6,475.8 583.8,476.2 584.1,477.1 584.3,474.8 584.6,478.1 584.8,475.5 585.1,477.9 585.3,478.5 585.6,478.0 585.8,477.1 586.1,476.8 586.3,476.6 586.6,478.4 586.8,477.8 587.1,476.8 587.3,478.4 587.6,477.2 587.8,477.4 588.1,477.7 588.3,477.4 588.6,477.2 588.8,477.8 589.1,477.4 589.3,477.0 589.6,476.1 589.8,477.1 590.1,476.7 590.3,476.9 590.6,477.0 590.8,475.8 591.1,477.8 591.3,474.7 591.6,475.0 591.8,476.8 592.0,476.0 592.3,477.6 592.5,478.1 592.8,477.4 593.0,477.9 593.3,477.5 593.5,476.8 593.8,477.2 594.0,477.8 594.3,477.9 594.5,477.5 594.8,477.6 595.0,478.6 595.3,477.3 595.5,477.7 595.8,476.3 596.0,478.7 596.3,478.4 596.5,475.8 596.8,478.6 597.0,475.5 597.3,478.6 597.5,477.5 597.8,478.2 598.0,477.5 598.3,478.1 598.5,476.4 598.8,480.5 599.0,478.5 599.3,479.1 599.5,477.4 599.8,475.5 600.0,475.3 600.3,477.6 600.5,476.5 600.8,476.8 601.0,477.9 601.3,479.4 601.5,477.8 601.8,476.9 602.0,477.3 602.3,477.6 602.5,479.6 602.8,477.5 603.0,477.9 603.3,477.7 603.5,476.2 603.8,479.3 604.0,477.7 604.3,477.4 604.5,477.3 604.8,477.1 605.0,477.0 605.3,477.6 605.5,476.6 605.8,479.3 606.0,478.1 606.3,478.2 606.5,478.4 606.8,478.7 607.0,476.7" fill="none" stroke="#0a0ab0" stroke-width="2.6" stroke-linejoin="round"/>
<rect x="238.2" y="418.2" width="368.8" height="118.40000000000003" fill="#fff"/>
<text x="238.2" y="548.6" text-anchor="middle" font-size="11.5" font-weight="bold" fill="#111" font-family="Liberation Sans">0</text>
<line x1="275.1" y1="418.2" x2="275.1" y2="536.6" stroke="#777" stroke-width="1" stroke-dasharray="1,3"/>
<text x="275.1" y="548.6" text-anchor="middle" font-size="11.5" font-weight="bold" fill="#111" font-family="Liberation Sans">2</text>
<line x1="312.0" y1="418.2" x2="312.0" y2="536.6" stroke="#777" stroke-width="1" stroke-dasharray="1,3"/>
<text x="312.0" y="548.6" text-anchor="middle" font-size="11.5" font-weight="bold" fill="#111" font-family="Liberation Sans">4</text>
<line x1="348.8" y1="418.2" x2="348.8" y2="536.6" stroke="#777" stroke-width="1" stroke-dasharray="1,3"/>
<text x="348.8" y="548.6" text-anchor="middle" font-size="11.5" font-weight="bold" fill="#111" font-family="Liberation Sans">6</text>
<line x1="385.7" y1="418.2" x2="385.7" y2="536.6" stroke="#777" stroke-width="1" stroke-dasharray="1,3"/>
<text x="385.7" y="548.6" text-anchor="middle" font-size="11.5" font-weight="bold" fill="#111" font-family="Liberation Sans">8</text>
<line x1="422.6" y1="418.2" x2="422.6" y2="536.6" stroke="#777" stroke-width="1" stroke-dasharray="1,3"/>
<text x="422.6" y="548.6" text-anchor="middle" font-size="11.5" font-weight="bold" fill="#111" font-family="Liberation Sans">10</text>
<line x1="459.5" y1="418.2" x2="459.5" y2="536.6" stroke="#777" stroke-width="1" stroke-dasharray="1,3"/>
<text x="459.5" y="548.6" text-anchor="middle" font-size="11.5" font-weight="bold" fill="#111" font-family="Liberation Sans">12</text>
<line x1="496.4" y1="418.2" x2="496.4" y2="536.6" stroke="#777" stroke-width="1" stroke-dasharray="1,3"/>
<text x="496.4" y="548.6" text-anchor="middle" font-size="11.5" font-weight="bold" fill="#111" font-family="Liberation Sans">14</text>
<line x1="533.2" y1="418.2" x2="533.2" y2="536.6" stroke="#777" stroke-width="1" stroke-dasharray="1,3"/>
<text x="533.2" y="548.6" text-anchor="middle" font-size="11.5" font-weight="bold" fill="#111" font-family="Liberation Sans">16</text>
<line x1="570.1" y1="418.2" x2="570.1" y2="536.6" stroke="#777" stroke-width="1" stroke-dasharray="1,3"/>
<text x="570.1" y="548.6" text-anchor="middle" font-size="11.5" font-weight="bold" fill="#111" font-family="Liberation Sans">18</text>
<text x="607.0" y="548.6" text-anchor="middle" font-size="11.5" font-weight="bold" fill="#111" font-family="Liberation Sans">20</text>
<text x="233.2" y="540.6" text-anchor="end" font-size="11.5" font-weight="bold" fill="#111" font-family="Liberation Sans">−100</text>
<line x1="238.2" y1="507.0" x2="607.0" y2="507.0" stroke="#777" stroke-width="1" stroke-dasharray="1,3"/>
<text x="233.2" y="511.0" text-anchor="end" font-size="11.5" font-weight="bold" fill="#111" font-family="Liberation Sans">−50</text>
<line x1="238.2" y1="477.4" x2="607.0" y2="477.4" stroke="#777" stroke-width="1" stroke-dasharray="1,3"/>
<text x="233.2" y="481.4" text-anchor="end" font-size="11.5" font-weight="bold" fill="#111" font-family="Liberation Sans">0</text>
<line x1="238.2" y1="447.8" x2="607.0" y2="447.8" stroke="#777" stroke-width="1" stroke-dasharray="1,3"/>
<text x="233.2" y="451.8" text-anchor="end" font-size="11.5" font-weight="bold" fill="#111" font-family="Liberation Sans">50</text>
<text x="233.2" y="422.2" text-anchor="end" font-size="11.5" font-weight="bold" fill="#111" font-family="Liberation Sans">100</text>
<polyline points="238.2,478.4 238.7,478.0 239.2,480.2 239.7,477.3 240.2,478.1 240.7,478.7 241.2,477.8 241.7,477.3 242.2,477.5 242.7,476.1 243.2,477.0 243.7,478.6 244.2,476.2 244.7,474.8 245.2,478.8 245.7,476.9 246.2,478.2 246.7,475.4 247.2,475.8 247.7,476.8 248.2,478.0 248.7,478.5 249.2,475.8 249.7,477.1 250.2,476.5 250.7,474.5 251.2,480.1 251.7,478.2 252.2,476.4 252.7,477.6 253.2,478.9 253.6,477.1 254.1,476.3 254.6,477.0 255.1,476.5 255.6,477.7 256.1,478.9 256.6,475.7 257.1,477.7 257.6,477.5 258.1,478.0 258.6,476.1 259.1,477.2 259.6,478.4 260.1,479.2 260.6,478.5 261.1,475.3 261.6,475.9 262.1,478.8 262.6,477.9 263.1,478.1 263.6,477.8 264.1,476.1 264.6,474.4 265.1,479.7 265.6,475.4 266.1,477.7 266.6,477.0 267.1,476.4 267.6,476.7 268.1,479.2 268.6,477.8 269.1,478.8 269.6,477.2 270.1,476.5 270.6,477.6 271.1,477.0 271.6,477.7 272.1,478.5 272.6,477.2 273.1,477.6 273.6,477.2 274.1,476.5 274.6,477.8 275.1,476.4 275.6,478.0 276.1,477.1 276.6,476.3 277.1,478.6 277.6,477.4 278.1,476.3 278.6,481.2 279.1,476.3 279.6,476.2 280.1,477.7 280.6,475.1 281.1,477.8 281.6,475.4 282.1,477.2 282.6,477.1 283.1,477.6 283.6,477.6 284.1,475.5 284.5,479.2 285.0,478.3 285.5,477.4 286.0,476.0 286.5,477.1 287.0,476.2 287.5,476.1 288.0,478.1 288.5,477.8 289.0,477.0 289.5,480.7 290.0,477.5 290.5,477.1 291.0,478.2 291.5,476.3 292.0,477.3 292.5,478.7 293.0,475.9 293.5,477.5 294.0,477.7 294.5,476.2 295.0,477.7 295.5,477.6 296.0,476.7 296.5,478.3 297.0,477.7 297.5,476.5 298.0,477.0 298.5,477.0 299.0,479.1 299.5,474.9 300.0,478.1 300.5,478.5 301.0,477.8 301.5,477.7 302.0,477.1 302.5,478.6 303.0,476.7 303.5,476.6 304.0,475.9 304.5,477.7 305.0,476.9 305.5,477.8 306.0,477.7 306.5,476.0 307.0,478.2 307.5,477.1 308.0,476.8 308.5,479.4 309.0,477.9 309.5,476.6 310.0,476.9 310.5,478.2 311.0,476.9 311.5,478.3 312.0,470.1 312.5,476.3 313.0,478.5 313.5,478.4 314.0,478.1 314.5,477.2 315.0,476.9 315.4,480.6 315.9,475.7 316.4,477.1 316.9,478.4 317.4,477.8 317.9,477.2 318.4,476.3 318.9,476.6 319.4,477.1 319.9,479.7 320.4,477.7 320.9,477.3 321.4,475.9 321.9,479.6 322.4,476.8 322.9,478.4 323.4,478.2 323.9,479.1 324.4,476.9 324.9,477.2 325.4,474.9 325.9,476.7 326.4,478.7 326.9,478.3 327.4,476.8 327.9,478.3 328.4,478.7 328.9,479.7 329.4,478.3 329.9,476.5 330.4,477.8 330.9,477.0 331.4,478.3 331.9,478.2 332.4,476.3 332.9,477.4 333.4,477.6 333.9,477.9 334.4,471.6 334.9,477.4 335.4,475.5 335.9,477.5 336.4,477.6 336.9,479.2 337.4,478.5 337.9,477.6 338.4,477.8 338.9,477.1 339.4,475.8 339.9,476.3 340.4,477.4 340.9,478.9 341.4,476.2 341.9,476.3 342.4,477.9 342.9,474.6 343.4,478.5 343.9,477.0 344.4,477.5 344.9,479.2 345.4,477.1 345.8,477.9 346.3,475.9 346.8,480.0 347.3,476.1 347.8,477.6 348.3,477.4 348.8,475.8 349.3,478.5 349.8,475.8 350.3,477.0 350.8,477.9 351.3,477.4 351.8,476.8 352.3,478.9 352.8,476.4 353.3,476.4 353.8,476.8 354.3,478.0 354.8,476.7 355.3,477.9 355.8,477.2 356.3,477.4 356.8,479.5 357.3,476.6 357.8,477.6 358.3,476.7 358.8,475.8 359.3,477.9 359.8,475.8 360.3,477.0 360.8,477.7 361.3,476.6 361.8,478.7 362.3,480.6 362.8,477.4 363.3,477.8 363.8,476.3 364.3,477.0 364.8,478.1 365.3,476.7 365.8,476.8 366.3,477.0 366.8,476.3 367.3,478.6 367.8,478.5 368.3,477.8 368.8,478.2 369.3,477.8 369.8,479.7 370.3,476.4 370.8,478.2 371.3,478.1 371.8,477.3 372.3,477.4 372.8,477.4 373.3,475.5 373.8,478.0 374.3,478.5 374.8,478.2 375.3,475.6 375.8,479.2 376.3,478.8 376.7,478.1 377.2,476.4 377.7,478.6 378.2,475.8 378.7,477.2 379.2,475.4 379.7,479.7 380.2,476.8 380.7,476.1 381.2,478.8 381.7,474.6 382.2,477.1 382.7,477.9 383.2,478.3 383.7,478.6 384.2,476.0 384.7,478.5 385.2,477.5 385.7,476.5 386.2,479.0 386.7,477.2 387.2,475.3 387.7,479.3 388.2,477.3 388.7,478.0 389.2,477.7 389.7,476.4 390.2,477.9 390.7,476.9 391.2,477.3 391.7,477.7 392.2,480.2 392.7,476.8 393.2,478.1 393.7,477.1 394.2,478.1 394.7,477.9 395.2,478.2 395.7,477.2 396.2,475.4 396.7,478.0 397.2,477.1 397.7,478.0 398.2,475.9 398.7,476.8 399.2,475.8 399.7,479.3 400.2,476.8 400.7,476.8 401.2,478.1 401.7,476.1 402.2,477.3 402.7,478.2 403.2,477.4 403.7,475.7 404.2,478.1 404.7,478.0 405.2,476.3 405.7,476.1 406.2,479.1 406.7,476.7 407.2,477.8 407.6,476.4 408.1,476.1 408.6,477.1 409.1,478.1 409.6,478.1 410.1,475.3 410.6,477.4 411.1,476.2 411.6,478.2 412.1,477.9 412.6,475.4 413.1,477.4 413.6,476.1 414.1,477.3 414.6,475.4 415.1,478.6 415.6,478.7 416.1,477.3 416.6,477.8 417.1,477.3 417.6,478.2 418.1,476.1 418.6,474.7 419.1,477.3 419.6,477.0 420.1,478.9 420.6,477.4 421.1,478.5 421.6,477.8 422.1,479.4 422.6,477.9 423.1,476.7 423.6,476.7 424.1,477.8 424.6,479.3 425.1,478.6 425.6,476.1 426.1,478.7 426.6,477.6 427.1,476.2 427.6,476.1 428.1,475.9 428.6,477.3 429.1,479.4 429.6,477.3 430.1,477.8 430.6,477.4 431.1,475.8 431.6,477.9 432.1,477.0 432.6,478.0 433.1,478.0 433.6,479.1 434.1,478.0 434.6,479.0 435.1,475.8 435.6,476.8 436.1,479.7 436.6,476.6 437.1,479.1 437.6,477.7 438.0,477.1 438.5,475.9 439.0,478.2 439.5,478.7 440.0,478.1 440.5,477.6 441.0,477.8 441.5,476.3 442.0,478.5 442.5,479.0 443.0,479.1 443.5,476.4 444.0,477.8 444.5,477.8 445.0,477.9 445.5,478.2 446.0,476.7 446.5,474.8 447.0,477.3 447.5,476.3 448.0,477.5 448.5,477.5 449.0,477.3 449.5,477.5 450.0,477.1 450.5,477.5 451.0,478.3 451.5,477.8 452.0,475.8 452.5,477.6 453.0,478.3 453.5,476.8 454.0,477.9 454.5,477.9 455.0,476.3 455.5,476.1 456.0,477.3 456.5,477.0 457.0,476.6 457.5,475.9 458.0,477.0 458.5,476.2 459.0,477.1 459.5,477.2 460.0,477.5 460.5,478.5 461.0,474.4 461.5,476.1 462.0,482.3 462.5,477.1 463.0,477.6 463.5,479.9 464.0,478.8 464.5,476.7 465.0,477.5 465.5,477.6 466.0,479.1 466.5,477.1 467.0,478.1 467.5,478.5 468.0,482.1 468.5,475.8 468.9,475.5 469.4,476.7 469.9,475.8 470.4,476.3 470.9,476.5 471.4,476.8 471.9,477.4 472.4,477.2 472.9,476.9 473.4,477.5 473.9,476.9 474.4,477.6 474.9,477.1 475.4,477.8 475.9,477.7 476.4,477.0 476.9,477.4 477.4,476.8 477.9,477.4 478.4,477.3 478.9,476.9 479.4,476.0 479.9,476.1 480.4,478.2 480.9,477.2 481.4,475.4 481.9,477.3 482.4,477.1 482.9,475.4 483.4,478.4 483.9,475.8 484.4,478.0 484.9,476.8 485.4,478.2 485.9,479.0 486.4,477.2 486.9,479.2 487.4,474.4 487.9,477.4 488.4,478.5 488.9,479.3 489.4,475.8 489.9,477.8 490.4,475.1 490.9,479.0 491.4,478.7 491.9,476.5 492.4,478.4 492.9,475.8 493.4,477.1 493.9,475.4 494.4,478.7 494.9,478.0 495.4,477.8 495.9,478.3 496.4,477.5 496.9,477.9 497.4,478.5 497.9,477.4 498.4,475.6 498.9,479.1 499.4,477.7 499.8,478.9 500.3,477.0 500.8,476.0 501.3,476.4 501.8,477.6 502.3,477.5 502.8,478.4 503.3,478.2 503.8,477.1 504.3,479.3 504.8,477.0 505.3,478.5 505.8,477.3 506.3,476.9 506.8,477.5 507.3,477.2 507.8,478.6 508.3,475.8 508.8,478.1 509.3,477.4 509.8,476.6 510.3,476.2 510.8,477.7 511.3,477.8 511.8,476.6 512.3,476.2 512.8,479.5 513.3,477.6 513.8,476.2 514.3,478.7 514.8,477.4 515.3,478.5 515.8,477.4 516.3,479.4 516.8,477.5 517.3,476.6 517.8,476.6 518.3,478.1 518.8,477.6 519.3,477.1 519.8,477.4 520.3,477.7 520.8,475.7 521.3,477.8 521.8,476.7 522.3,477.5 522.8,477.7 523.3,477.7 523.8,478.7 524.3,476.9 524.8,477.3 525.3,476.0 525.8,477.7 526.3,477.0 526.8,477.4 527.3,478.1 527.8,478.1 528.3,477.8 528.8,477.3 529.3,477.0 529.8,477.8 530.2,479.0 530.7,478.7 531.2,477.1 531.7,475.5 532.2,476.3 532.7,477.3 533.2,476.0 533.7,476.1 534.2,476.4 534.7,479.1 535.2,476.8 535.7,478.0 536.2,477.0 536.7,477.8 537.2,476.7 537.7,476.8 538.2,477.6 538.7,475.1 539.2,476.1 539.7,480.1 540.2,477.6 540.7,474.7 541.2,477.2 541.7,476.8 542.2,476.9 542.7,478.6 543.2,477.4 543.7,476.9 544.2,478.4 544.7,478.5 545.2,477.6 545.7,478.9 546.2,477.4 546.7,475.8 547.2,476.7 547.7,479.4 548.2,479.3 548.7,476.0 549.2,477.2 549.7,477.5 550.2,478.1 550.7,475.5 551.2,478.6 551.7,478.2 552.2,477.2 552.7,479.7 553.2,479.3 553.7,477.2 554.2,478.3 554.7,476.2 555.2,478.0 555.7,476.6 556.2,476.3 556.7,476.6 557.2,476.2 557.7,478.1 558.2,477.2 558.7,476.8 559.2,477.1 559.7,477.5 560.2,478.4 560.7,479.0 561.1,478.2 561.6,475.1 562.1,475.7 562.6,476.6 563.1,475.8 563.6,479.3 564.1,476.9 564.6,478.1 565.1,477.2 565.6,478.0 566.1,476.9 566.6,476.4 567.1,475.8 567.6,477.9 568.1,478.2 568.6,476.4 569.1,478.0 569.6,478.7 570.1,476.9 570.6,476.8 571.1,478.1 571.6,477.1 572.1,476.8 572.6,477.6 573.1,475.3 573.6,476.6 574.1,474.6 574.6,477.1 575.1,478.2 575.6,478.7 576.1,475.6 576.6,478.8 577.1,477.5 577.6,477.5 578.1,477.4 578.6,478.2 579.1,477.4 579.6,477.6 580.1,477.4 580.6,478.0 581.1,477.3 581.6,476.9 582.1,478.4 582.6,477.8 583.1,477.6 583.6,476.2 584.1,476.2 584.6,477.3 585.1,476.4 585.6,478.7 586.1,476.8 586.6,477.0 587.1,476.4 587.6,478.0 588.1,475.5 588.6,478.0 589.1,479.0 589.6,477.5 590.1,477.9 590.6,477.9 591.1,477.9 591.6,476.9 592.0,476.8 592.5,473.1 593.0,477.0 593.5,477.6 594.0,478.3 594.5,475.6 595.0,475.8 595.5,477.0 596.0,476.7 596.5,477.7 597.0,475.4 597.5,477.7 598.0,476.5 598.5,478.8 599.0,477.9 599.5,476.8 600.0,477.3 600.5,476.7 601.0,477.6 601.5,476.4 602.0,477.3 602.5,477.5 603.0,476.9 603.5,476.6 604.0,477.5 604.5,476.9 605.0,478.5 605.5,476.6 606.0,478.3 606.5,477.0 607.0,477.0" fill="none" stroke="#0000b4" stroke-width="3.2" stroke-linejoin="bevel"/>
<rect x="238.2" y="418.2" width="368.8" height="118.40000000000003" fill="none" stroke="#444" stroke-width="1.4"/>
</svg>
<div class="a" style="left:174px;top:556px;width:13px;height:13px;border:1px solid #8a8a8a;background:linear-gradient(135deg,#cfcfcf,#f4f4f4)"></div>
<div class="a lab" style="left:190px;top:559px;font-size:9.5px;line-height:12px;color:#222;letter-spacing:0.9px">Compare</div>

<!-- caption -->
<div class="a" style="left:0;top:604px;width:672px;text-align:center;font-family:'Liberation Serif',serif;font-weight:bold;color:#4472c4;font-size:15px;line-height:14px;letter-spacing:-0.2px">图<span style="font-size:14.5px">2</span>：<span style="font-size:14.5px;letter-spacing:-0.3px">InCTRL</span>平台促使用户分析每个轴承的摩擦指数，并允许他查看波形，为维护人员做<br>出决策提供必要的信息。</div>
</body></html>
